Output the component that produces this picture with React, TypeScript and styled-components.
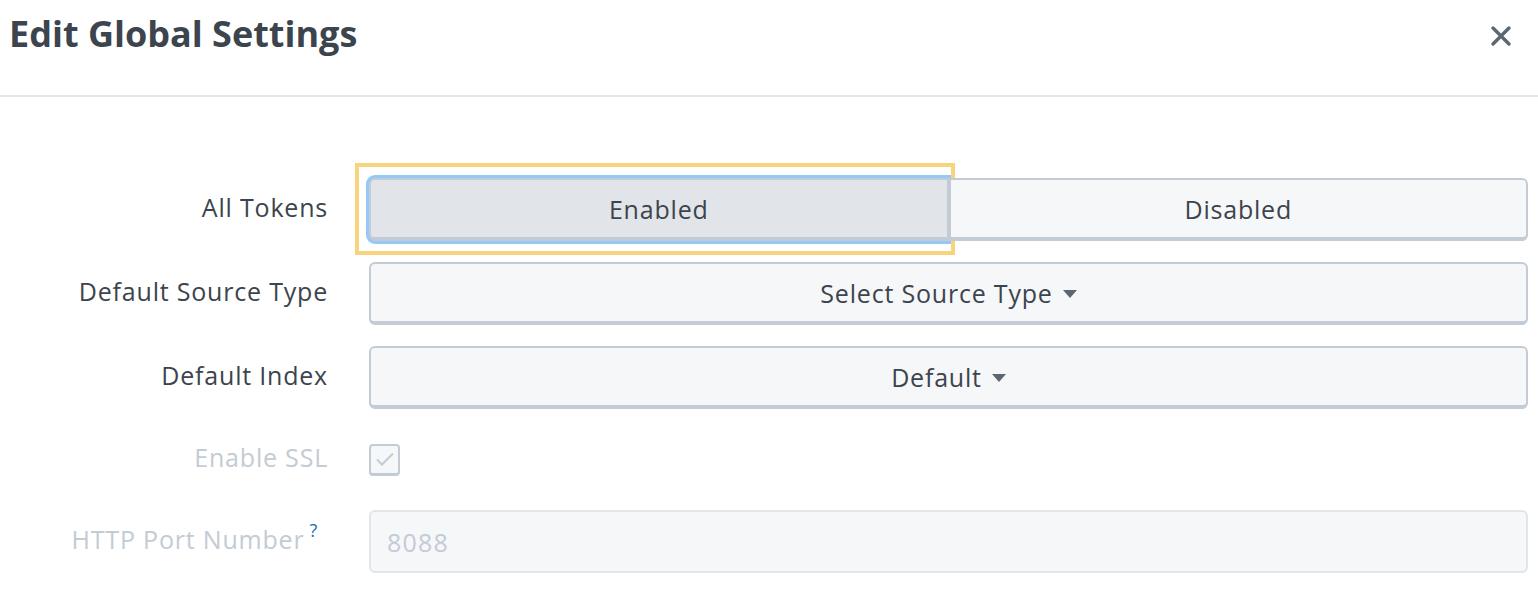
import React, { useState } from 'react';
import styled, { createGlobalStyle } from 'styled-components';

const GlobalStyle = createGlobalStyle`
    html, body {
        margin: 0;
        padding: 0;
        background: #ffffff;
    }
    body {
        font-family: "Open Sans", "Noto Sans", "Liberation Sans", sans-serif;
        color: #3c444d;
    }
`;

const SettingsDialog: React.FC = () => {
    const [tokens, setTokens] = useState<'enabled' | 'disabled'>('enabled');

    return (
        <StyledDialog>
            <StyledHeader>
                <StyledTitle>Edit Global Settings</StyledTitle>
                <StyledClose aria-label="Close">
                    <svg width="22" height="22" viewBox="0 0 22 22">
                        <path d="M3 3 L19 19 M19 3 L3 19" stroke="#5c6773" strokeWidth="3.4" strokeLinecap="round" />
                    </svg>
                </StyledClose>
            </StyledHeader>
            <StyledBody>
                <StyledLabel>All Tokens</StyledLabel>
                <StyledToggleGroup>
                    <StyledToggleWrap>
                        <StyledFocusFrame />
                        <StyledToggle selected={tokens === 'enabled'} focused onClick={() => setTokens('enabled')}>
                            Enabled
                        </StyledToggle>
                    </StyledToggleWrap>
                    <StyledToggleWrap>
                        <StyledToggle selected={tokens === 'disabled'} onClick={() => setTokens('disabled')}>
                            Disabled
                        </StyledToggle>
                    </StyledToggleWrap>
                </StyledToggleGroup>

                <StyledLabel>Default Source Type</StyledLabel>
                <StyledSelect>
                    Select Source Type <StyledCaret />
                </StyledSelect>

                <StyledLabel>Default Index</StyledLabel>
                <StyledSelect>
                    Default <StyledCaret />
                </StyledSelect>

                <StyledLabel disabled>Enable SSL</StyledLabel>
                <StyledCheckRow>
                    <StyledCheckbox>
                        <svg width="20" height="16" viewBox="0 0 20 16">
                            <path d="M2 8.5 L7 13.5 L18 2.5" fill="none" stroke="#c3cbd4" strokeWidth="2" />
                        </svg>
                    </StyledCheckbox>
                </StyledCheckRow>

                <StyledLabel disabled>
                    HTTP Port Number<StyledHelp>?</StyledHelp>
                </StyledLabel>
                <StyledInput value="8088" disabled readOnly />
            </StyledBody>
        </StyledDialog>
    );
};

const StyledDialog = styled.div`
    width: 1538px;
    height: 598px;
    overflow: hidden;
    background: #ffffff;
`;

const StyledHeader = styled.div`
    display: flex;
    align-items: flex-start;
    justify-content: space-between;
    height: 95px;
    padding: 0 26px 0 9px;
    border-bottom: 2px solid #e1e6eb;
`;

const StyledTitle = styled.h1`
    margin: 12px 0 0;
    font-size: 36px;
    font-weight: 700;
    line-height: 44px;
    color: #3c444d;
`;

const StyledClose = styled.button`
    margin-top: 25px;
    padding: 0;
    border: none;
    background: none;
    width: 22px;
    height: 22px;
    cursor: pointer;
`;

const StyledBody = styled.div`
    display: grid;
    grid-template-columns: 328px 1fr;
    grid-template-rows: 63px 63px 63px 59px 63px;
    column-gap: 41px;
    row-gap: 21px;
    align-items: center;
    padding: 81px 10px 0 0;
    letter-spacing: 0.8px;
`;

const StyledLabel = styled.div<{ disabled?: boolean }>`
    text-align: right;
    font-size: 25px;
    line-height: 30px;
    margin-top: -5px;
    color: ${({ disabled }) => (disabled ? '#c3cbd4' : '#3c444d')};
`;

const StyledHelp = styled.sup`
    font-size: 18px;
    color: #1a6fb0;
    margin: 0 10px 0 5px;
    vertical-align: 12px;
    line-height: 0;
`;

const StyledToggleGroup = styled.div`
    display: flex;
    height: 63px;
`;

const StyledToggleWrap = styled.div`
    position: relative;
    flex: 1;
    display: flex;
`;

const StyledFocusFrame = styled.div`
    position: absolute;
    top: -15px;
    bottom: -14px;
    left: -14px;
    right: -6px;
    border: 4px solid #f8d47f;
    pointer-events: none;
`;

const StyledToggle = styled.button<{ selected?: boolean; focused?: boolean }>`
    flex: 1;
    font-family: inherit;
    font-size: 25px;
    letter-spacing: inherit;
    color: #3c444d;
    background: ${({ selected }) => (selected ? '#e1e4e8' : '#f6f7f8')};
    border: 2px solid #c3cbd4;
    border-bottom-width: 4px;
    border-radius: ${({ selected }) => (selected ? '6px 0 0 6px' : '0 6px 6px 0')};
    box-shadow: ${({ focused }) => (focused ? '0 0 0 3px #93c8f7' : 'none')};
    cursor: pointer;
    padding: 0;
`;

const StyledSelect = styled.button`
    height: 63px;
    display: flex;
    align-items: center;
    justify-content: center;
    gap: 10px;
    font-family: inherit;
    font-size: 25px;
    letter-spacing: inherit;
    color: #3c444d;
    background: #f6f7f8;
    border: 2px solid #c3cbd4;
    border-bottom-width: 4px;
    border-radius: 6px;
    padding: 0;
    cursor: pointer;
`;

const StyledCaret = styled.span`
    width: 0;
    height: 0;
    border-left: 7px solid transparent;
    border-right: 7px solid transparent;
    border-top: 8px solid #5c6773;
    margin-top: 2px;
`;

const StyledCheckRow = styled.div`
    display: flex;
    align-items: center;
`;

const StyledCheckbox = styled.div`
    width: 31px;
    height: 32px;
    box-sizing: border-box;
    display: flex;
    align-items: center;
    justify-content: center;
    border: 2px solid #c3cbd4;
    border-bottom-width: 3px;
    border-radius: 4px;
    background: #f6f7f8;
`;

const StyledInput = styled.input`
    height: 63px;
    box-sizing: border-box;
    font-family: inherit;
    font-size: 25px;
    letter-spacing: 1.2px;
    color: #c3cbd4;
    background: #f6f7f8;
    border: 2px solid #e1e6eb;
    border-radius: 6px;
    padding: 0 16px;
    outline: none;
    &:disabled {
        color: #c3cbd4;
        -webkit-text-fill-color: #c3cbd4;
    }
`;

export default function App() {
    return (
        <>
            <GlobalStyle />
            <SettingsDialog />
        </>
    );
}
